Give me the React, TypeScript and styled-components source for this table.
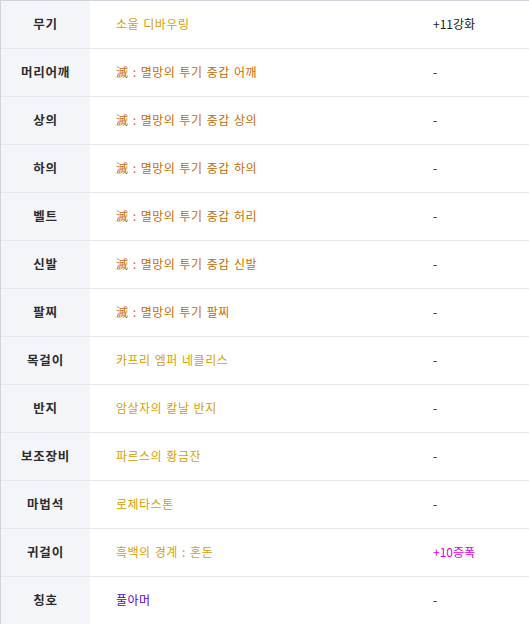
import styled, { createGlobalStyle } from 'styled-components';

const GlobalStyle = createGlobalStyle`
  body {
    margin: 0;
    background: #fff;
    font-family: "Noto Sans CJK KR", "Noto Sans", sans-serif;
  }
`;

type Grade = 'epic' | 'legend' | 'rare';

interface Equip {
    slot: string;
    name: string;
    grade: Grade;
    upgrade: string;
    amplified?: boolean;
}

const items: Equip[] = [
    { slot: '무기', name: '소울 디바우링', grade: 'epic', upgrade: '+11강화' },
    { slot: '머리어깨', name: '滅 : 멸망의 투기 중갑 어깨', grade: 'legend', upgrade: '-' },
    { slot: '상의', name: '滅 : 멸망의 투기 중갑 상의', grade: 'legend', upgrade: '-' },
    { slot: '하의', name: '滅 : 멸망의 투기 중갑 하의', grade: 'legend', upgrade: '-' },
    { slot: '벨트', name: '滅 : 멸망의 투기 중갑 허리', grade: 'legend', upgrade: '-' },
    { slot: '신발', name: '滅 : 멸망의 투기 중갑 신발', grade: 'legend', upgrade: '-' },
    { slot: '팔찌', name: '滅 : 멸망의 투기 팔찌', grade: 'legend', upgrade: '-' },
    { slot: '목걸이', name: '카프리 엠퍼 네클리스', grade: 'epic', upgrade: '-' },
    { slot: '반지', name: '암살자의 칼날 반지', grade: 'epic', upgrade: '-' },
    { slot: '보조장비', name: '파르스의 황금잔', grade: 'epic', upgrade: '-' },
    { slot: '마법석', name: '로제타스톤', grade: 'epic', upgrade: '-' },
    { slot: '귀걸이', name: '흑백의 경계 : 혼돈', grade: 'epic', upgrade: '+10증폭', amplified: true },
    { slot: '칭호', name: '풀아머', grade: 'rare', upgrade: '-' },
];

const gradeColor: Record<Grade, string> = {
    epic: '#d69f00',
    legend: '#c66c00',
    rare: '#5a00d2',
};

export default function App() {
    return (
        <>
            <GlobalStyle />
            <Table>
                {items.map((item) => (
                    <Row key={item.slot}>
                        <Slot>{item.slot}</Slot>
                        <ItemName $grade={item.grade}>{item.name}</ItemName>
                        <Upgrade $amplified={item.amplified}>{item.upgrade}</Upgrade>
                    </Row>
                ))}
            </Table>
        </>
    );
}

const Table = styled.div`
    width: 529px;
    border-top: 1px solid #cfd3dc;
    border-left: 1px solid #cfd3dc;
    box-sizing: border-box;
`;

const Row = styled.div`
    display: grid;
    grid-template-columns: 89px 1fr 99px;
    height: 48px;
    border-bottom: 1px solid #e6e8ee;
    box-sizing: border-box;
    font-size: 12px;
    &:last-child {
        border-bottom: none;
        height: 47px;
    }
`;

const Cell = styled.div`
    display: flex;
    align-items: center;
    padding-bottom: 3px;
    box-sizing: border-box;
`;

const Slot = styled(Cell)`
    justify-content: center;
    background: #f4f5f9;
    color: #2c2c2c;
    font-weight: 700;
    font-size: 12.5px;
    letter-spacing: 0.8px;
`;

const ItemName = styled(Cell)<{ $grade: Grade }>`
    padding-left: 26px;
    letter-spacing: 0.5px;
    word-spacing: 1px;
    color: ${(p) => gradeColor[p.$grade]};
`;

const Upgrade = styled(Cell)<{ $amplified?: boolean }>`
    padding-left: 3px;
    color: ${(p) => (p.$amplified ? '#e100e1' : '#1a1a1a')};
`;
